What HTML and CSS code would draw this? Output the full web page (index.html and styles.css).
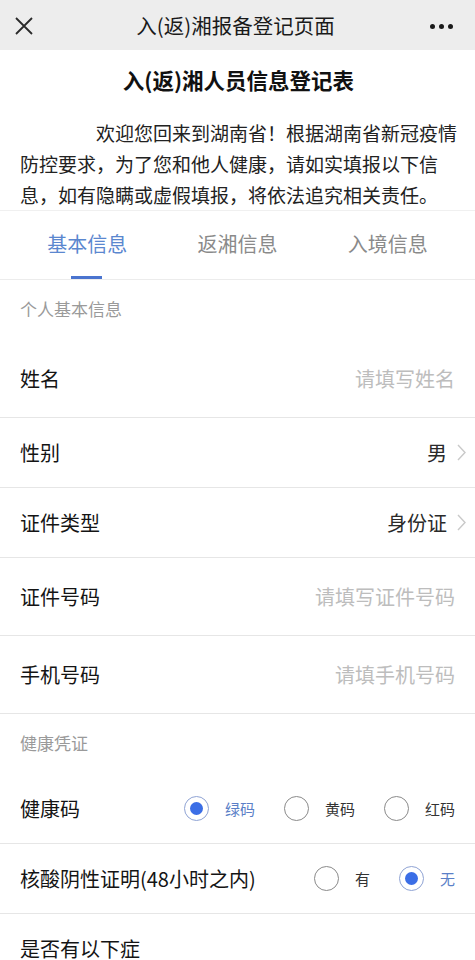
FILE: index.html
```html
<!DOCTYPE html>
<html lang="zh-CN">
<head>
  <meta charset="UTF-8">
  <meta name="viewport" content="width=device-width, initial-scale=1.0">
  <title>入(返)湘报备登记页面</title>
  <link rel="stylesheet" href="styles.css">
</head>
<body>
  <header class="topbar">
    <svg class="close" width="18" height="18" viewBox="0 0 18 18">
      <path d="M1 1 L17 17 M17 1 L1 17" stroke="#2a2a2a" stroke-width="1.8" fill="none"/>
    </svg>
    <span class="topbar-title">入(返)湘报备登记页面</span>
    <span class="more"><i></i><i></i><i></i></span>
  </header>

  <section class="intro">
    <h1>入(返)湘人员信息登记表</h1>
    <p>欢迎您回来到湖南省！根据湖南省新冠疫情防控要求，为了您和他人健康，请如实填报以下信息，如有隐瞒或虚假填报，将依法追究相关责任。</p>
  </section>

  <nav class="tabs">
    <a class="tab active">基本信息</a>
    <a class="tab">返湘信息</a>
    <a class="tab">入境信息</a>
  </nav>

  <div class="group-title">个人基本信息</div>
  <div class="row tall">
    <span class="label">姓名</span>
    <span class="placeholder">请填写姓名</span>
  </div>
  <div class="row">
    <span class="label">性别</span>
    <span class="value">男 <svg class="chev" width="9" height="17" viewBox="0 0 9 17"><path d="M1 1 L8 8.5 L1 16" stroke="#c9c9c9" stroke-width="1.4" fill="none"/></svg></span>
  </div>
  <div class="row">
    <span class="label">证件类型</span>
    <span class="value">身份证 <svg class="chev" width="9" height="17" viewBox="0 0 9 17"><path d="M1 1 L8 8.5 L1 16" stroke="#c9c9c9" stroke-width="1.4" fill="none"/></svg></span>
  </div>
  <div class="row tall">
    <span class="label">证件号码</span>
    <span class="placeholder">请填写证件号码</span>
  </div>
  <div class="row tall">
    <span class="label">手机号码</span>
    <span class="placeholder">请填手机号码</span>
  </div>

  <div class="group-title">健康凭证</div>
  <div class="row">
    <span class="label">健康码</span>
    <div class="options">
      <label class="option checked"><span class="radio"></span>绿码</label>
      <label class="option"><span class="radio"></span>黄码</label>
      <label class="option"><span class="radio"></span>红码</label>
    </div>
  </div>
  <div class="row">
    <span class="label">核酸阴性证明(48小时之内)</span>
    <div class="options">
      <label class="option"><span class="radio"></span>有</label>
      <label class="option checked"><span class="radio"></span>无</label>
    </div>
  </div>
  <div class="row">
    <span class="label">是否有以下症</span>
  </div>
</body>
</html>
```

FILE: styles.css
```css
body {
  margin: 0;
  background: #fff;
  color: #1a1a1a;
  font-family: "Noto Sans CJK SC", "Noto Sans", sans-serif;
}
.topbar {
  height: 50px;
  background: #ededed;
  display: flex;
  align-items: center;
  justify-content: space-between;
  padding: 0 22px 0 15px;
}
.topbar-title {
  font-size: 20.5px;
  color: #1a1a1a;
  margin-left: 8px;
}
.close {
  display: block;
  margin-top: 2px;
}
.more {
  display: flex;
  gap: 4px;
  margin-top: 2px;
}
.more i {
  width: 5px;
  height: 5px;
  border-radius: 50%;
  background: #1a1a1a;
}
.intro {
  padding: 15px 18px 0 20px;
}
.intro h1 {
  margin: 0;
  font-size: 21.5px;
  line-height: 30px;
  font-weight: bold;
  text-align: center;
  color: #111;
}
.intro p {
  margin: 22px 0 0;
  font-size: 19px;
  line-height: 31px;
  text-indent: 76px;
  color: #222;
}
.tabs {
  display: grid;
  grid-template-columns: repeat(3, 1fr);
  padding: 0 12px;
  height: 70px;
  box-sizing: border-box;
  border-top: 1px solid #f0f0f0;
  border-bottom: 1px solid #ececec;
}
.tab {
  display: flex;
  align-items: center;
  justify-content: center;
  font-size: 20px;
  color: #8a8a8a;
  position: relative;
  padding-bottom: 4px;
}
.tab.active {
  color: #5b87cf;
}
.tab.active::after {
  content: "";
  position: absolute;
  bottom: 0;
  left: 50%;
  width: 31px;
  height: 3px;
  margin-left: -16px;
  background: #4a74cf;
}
.group-title {
  height: 60px;
  display: flex;
  align-items: center;
  padding: 0 20px 4px;
  box-sizing: border-box;
  font-size: 17px;
  color: #9a9a9a;
}
.row {
  height: 70px;
  box-sizing: border-box;
  display: flex;
  align-items: center;
  justify-content: space-between;
  padding: 0 20px;
  border-bottom: 1px solid #e6e6e6;
  font-size: 20px;
}
.row.tall {
  height: 78px;
}
.label {
  color: #141414;
}
.placeholder {
  color: #bdbdbd;
}
.value {
  display: flex;
  align-items: center;
  gap: 10px;
  color: #2a2a2a;
  margin-right: -11px;
}
.chev {
  display: block;
}
.options {
  display: flex;
  gap: 29px;
}
.option {
  display: flex;
  align-items: center;
  gap: 16px;
  font-size: 15px;
  color: #333;
}
.radio {
  width: 25px;
  height: 25px;
  box-sizing: border-box;
  border: 1px solid #8a8a8a;
  border-radius: 50%;
  display: flex;
  align-items: center;
  justify-content: center;
}
.option.checked {
  color: #5b7fc7;
}
.option.checked .radio {
  border: 1.5px solid #8fa3d4;
}
.option.checked .radio::after {
  content: "";
  width: 13px;
  height: 13px;
  border-radius: 50%;
  background: #3b6ee6;
}
```
